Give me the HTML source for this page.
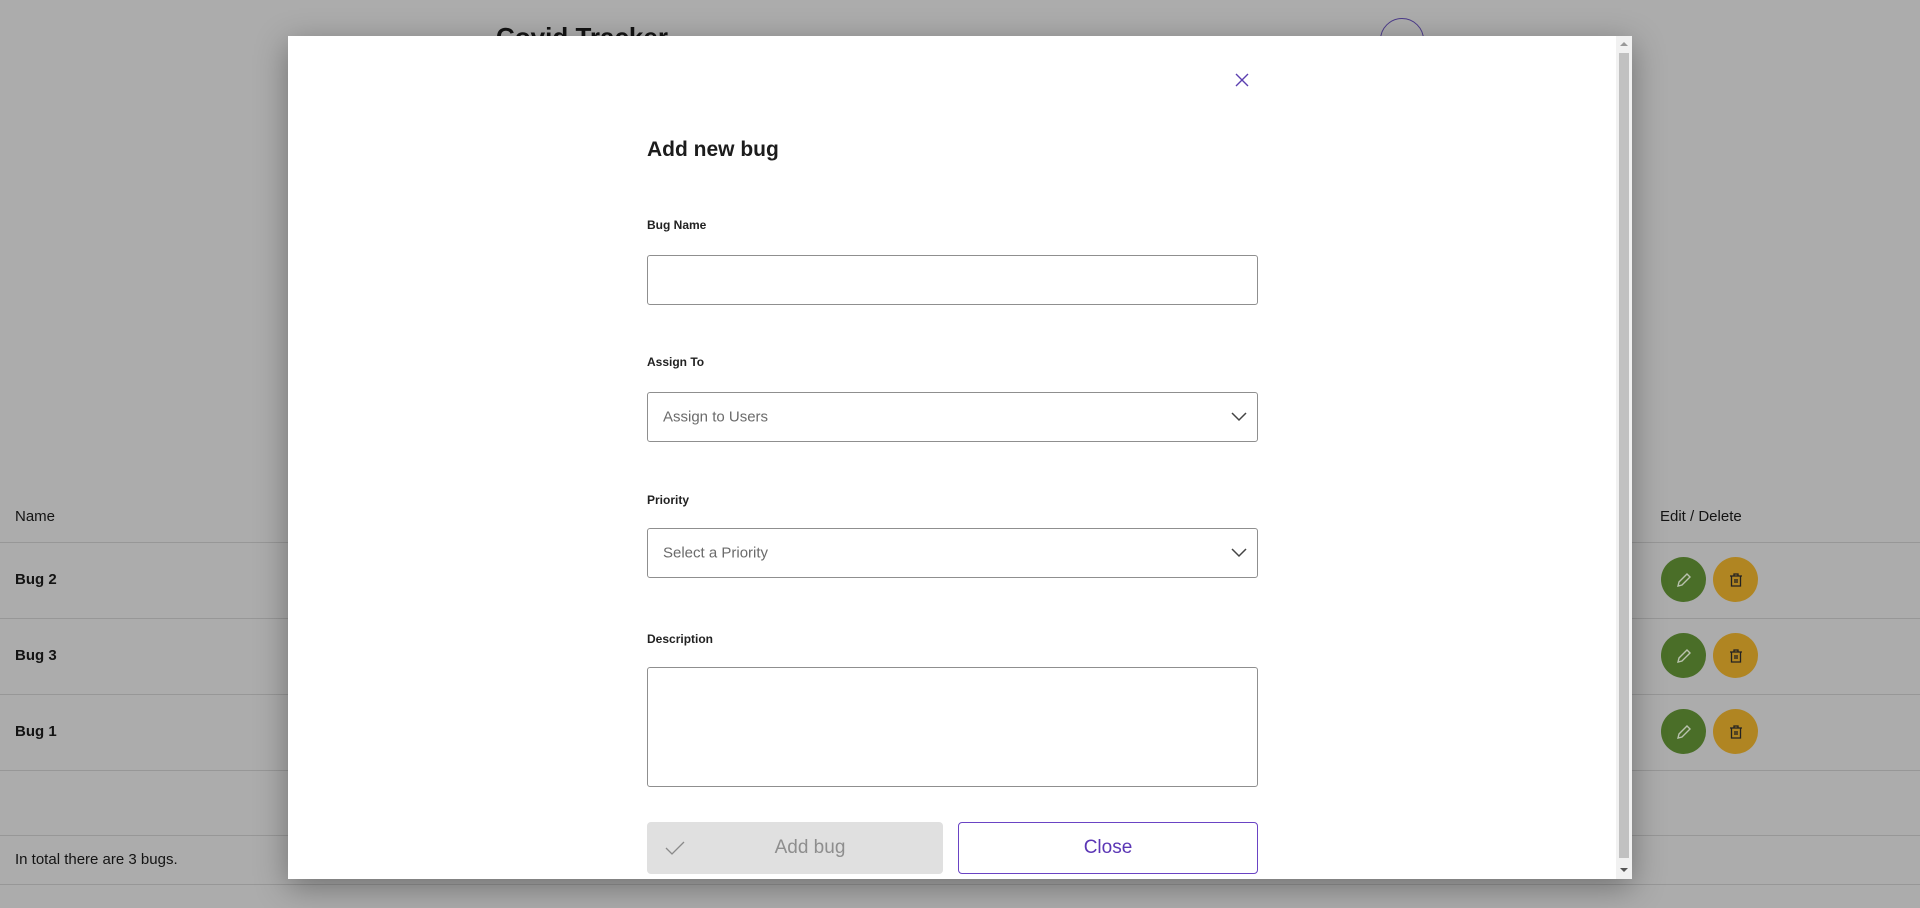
<!DOCTYPE html>
<html><head><meta charset="utf-8"><style>
*{box-sizing:border-box;margin:0;padding:0}
body{width:1920px;height:908px;overflow:hidden;background:#acacac;font-family:"Liberation Sans",sans-serif;position:relative;color:#141414}
.abs{position:absolute}
.line{position:absolute;left:0;width:1920px;height:1px;background:#979797}
.t{position:absolute;font-size:15px;line-height:18px}
.circ{position:absolute;width:45px;height:45px;border-radius:50%;display:flex;align-items:center;justify-content:center}
.g{background:#4a6e28}.y{background:#b08522}
.modal{position:absolute;left:288px;top:36px;width:1344px;height:843px;background:#fff;box-shadow:0 8px 30px rgba(0,0,0,.35)}
.lbl{position:absolute;left:359px;font-size:12px;font-weight:bold;color:#222}
.inp{position:absolute;left:359px;width:611px;border:1px solid #8f8f8f;border-radius:3px}
.ph{position:absolute;left:15px;top:50%;transform:translateY(-50%);font-size:15px;color:#6b6b6b}
.chev{position:absolute;right:10px;top:50%;transform:translateY(-50%)}
</style></head><body>
<div class="abs" style="left:496px;top:22px;font-size:26px;font-weight:bold">Covid Tracker</div>
<div class="abs" style="left:1380px;top:18px;width:44px;height:44px;border:1.5px solid #4b3a8a;border-radius:50%"></div>

<div class="t" style="left:15px;top:508px">Name</div>
<div class="t" style="left:1660px;top:508px">Edit / Delete</div>
<div class="line" style="top:542px"></div>
<div class="t" style="left:15px;top:571px;font-weight:bold">Bug 2</div>
<div class="line" style="top:618px"></div>
<div class="t" style="left:15px;top:647px;font-weight:bold">Bug 3</div>
<div class="line" style="top:694px"></div>
<div class="t" style="left:15px;top:723px;font-weight:bold">Bug 1</div>
<div class="line" style="top:770px"></div>
<div class="line" style="top:835px"></div>
<div class="t" style="left:15px;top:851px">In total there are 3 bugs.</div>
<div class="line" style="top:884px"></div>

<div class="circ g" style="left:1661px;top:557px"><svg width="18" height="18" viewBox="0 0 18 18"><path d="M3 15l1-4 8-8 3 3-8 8z" fill="none" stroke="#b9c2ae" stroke-width="1.4"/></svg></div>
<div class="circ y" style="left:1713px;top:557px"><svg width="16" height="16" viewBox="0 0 16 16"><path d="M2 4h12M6 4V2h4v2M3.5 4h9v10h-9zM7 7v4M9 7v4" fill="none" stroke="#222" stroke-width="1.3"/></svg></div>
<div class="circ g" style="left:1661px;top:633px"><svg width="18" height="18" viewBox="0 0 18 18"><path d="M3 15l1-4 8-8 3 3-8 8z" fill="none" stroke="#b9c2ae" stroke-width="1.4"/></svg></div>
<div class="circ y" style="left:1713px;top:633px"><svg width="16" height="16" viewBox="0 0 16 16"><path d="M2 4h12M6 4V2h4v2M3.5 4h9v10h-9zM7 7v4M9 7v4" fill="none" stroke="#222" stroke-width="1.3"/></svg></div>
<div class="circ g" style="left:1661px;top:709px"><svg width="18" height="18" viewBox="0 0 18 18"><path d="M3 15l1-4 8-8 3 3-8 8z" fill="none" stroke="#b9c2ae" stroke-width="1.4"/></svg></div>
<div class="circ y" style="left:1713px;top:709px"><svg width="16" height="16" viewBox="0 0 16 16"><path d="M2 4h12M6 4V2h4v2M3.5 4h9v10h-9zM7 7v4M9 7v4" fill="none" stroke="#222" stroke-width="1.3"/></svg></div>

<div class="modal">
  <svg class="abs" style="left:947px;top:37px" width="14" height="14" viewBox="0 0 14 14"><path d="M1 1l12 12M13 1L1 13" stroke="#5b3fb0" stroke-width="1.4"/></svg>
  <div class="abs" style="left:359px;top:102px;font-size:21px;font-weight:bold;color:#1c1c1c">Add new bug</div>
  <div class="lbl" style="top:182px">Bug Name</div>
  <div class="inp" style="top:219px;height:50px"></div>
  <div class="lbl" style="top:319px">Assign To</div>
  <div class="inp" style="top:356px;height:50px"><span class="ph">Assign to Users</span><svg class="chev" width="16" height="10" viewBox="0 0 16 10"><path d="M1 1l7 7 7-7" fill="none" stroke="#444" stroke-width="1.5"/></svg></div>
  <div class="lbl" style="top:457px">Priority</div>
  <div class="inp" style="top:492px;height:50px"><span class="ph">Select a Priority</span><svg class="chev" width="16" height="10" viewBox="0 0 16 10"><path d="M1 1l7 7 7-7" fill="none" stroke="#444" stroke-width="1.5"/></svg></div>
  <div class="lbl" style="top:596px">Description</div>
  <div class="inp" style="top:631px;height:120px"></div>
  <div class="abs" style="left:359px;top:786px;width:296px;height:52px;background:#e0e0e0;border-radius:4px">
    <svg class="abs" style="left:18px;top:18px" width="20" height="16" viewBox="0 0 20 16"><path d="M1 8l6 6L19 2" fill="none" stroke="#8a8a8a" stroke-width="1.3"/></svg>
    <div class="abs" style="left:0;width:296px;top:15px;text-align:center;font-size:19px;color:#8e8e8e;padding-left:30px">Add bug</div>
  </div>
  <div class="abs" style="left:670px;top:786px;width:300px;height:52px;border:1.5px solid #6a44c4;border-radius:4px;text-align:center;font-size:19px;color:#5b36b5;line-height:49px">Close</div>
  <div class="abs" style="left:1328px;top:0;width:16px;height:843px;background:#f1f1f1">
    <div class="abs" style="left:3px;top:17px;width:10px;height:805px;background:#c1c1c1"></div>
    <div class="abs" style="left:4px;top:6px;width:0;height:0;border:4px solid transparent;border-bottom-color:#999;border-top:0"></div>
    <div class="abs" style="left:4px;top:832px;width:0;height:0;border:4px solid transparent;border-top-color:#555;border-bottom:0"></div>
  </div>
</div>
</body></html>
